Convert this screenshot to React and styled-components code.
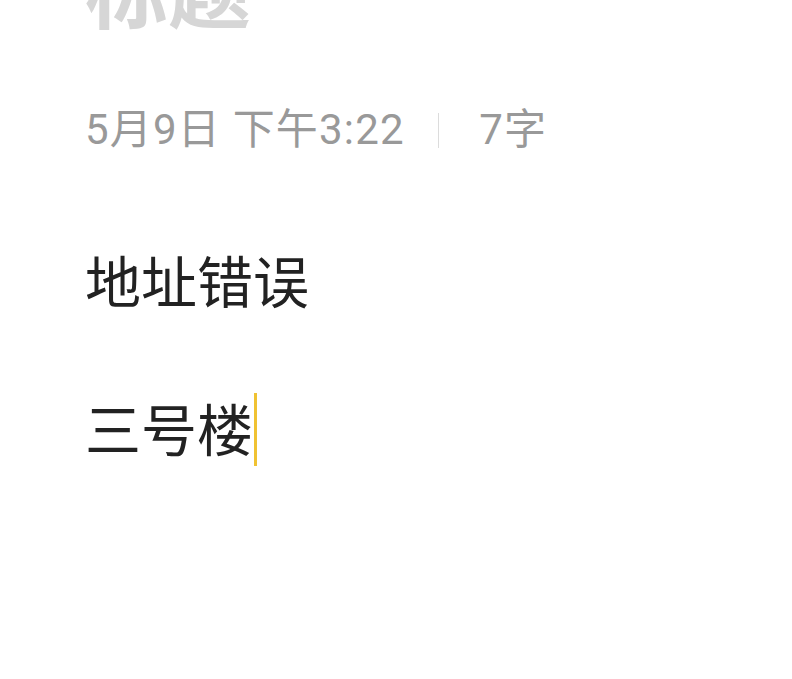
import React from "react";
import styled, { createGlobalStyle } from "styled-components";

const Global = createGlobalStyle`
  html, body { margin: 0; padding: 0; background: #ffffff; }
  body { font-family: Roboto, "Noto Sans CJK SC", sans-serif; }
`;

const Page = styled.div`
  width: 792px;
  height: 679px;
  overflow: hidden;
  background: #ffffff;
  box-sizing: border-box;
  padding: 0 40px 0 85px;
  display: flex;
  flex-direction: column;
`;

const Title = styled.h1`
  margin: -64px 0 0 0;
  font-family: "Noto Sans CJK SC", sans-serif;
  font-weight: 700;
  font-size: 83px;
  line-height: 100px;
  color: #d6d6d6;
`;

const Meta = styled.div`
  margin-top: 66px;
  display: flex;
  align-items: center;
  font-family: Roboto, "Noto Sans CJK SC", sans-serif;
  font-size: 42px;
  line-height: 56px;
  letter-spacing: 1.2px;
  color: #999999;
`;

const Divider = styled.span`
  display: inline-block;
  width: 1.5px;
  height: 35px;
  background: #dcdcdc;
  margin: 0 40px 0 33px;
`;

const Body = styled.div`
  margin-top: 84px;
  font-family: "Noto Sans CJK SC", sans-serif;
  font-size: 56px;
  line-height: 74px;
  color: #222222;
`;

const Para = styled.p`
  margin: 0;
  min-height: 74px;
`;

const Caret = styled.span`
  display: inline-block;
  width: 3px;
  height: 73px;
  background: #f0c232;
  vertical-align: top;
  margin-left: 1px;
  transform: translateY(3px);
`;

export default function App() {
  return (
    <>
      <Global />
      <Page>
        <Title>标题</Title>
        <Meta>
          <span>5月9日 下午3:22</span>
          <Divider />
          <span>7字</span>
        </Meta>
        <Body>
          <Para>地址错误</Para>
          <Para />
          <Para>
            三号楼
            <Caret />
          </Para>
        </Body>
      </Page>
    </>
  );
}
